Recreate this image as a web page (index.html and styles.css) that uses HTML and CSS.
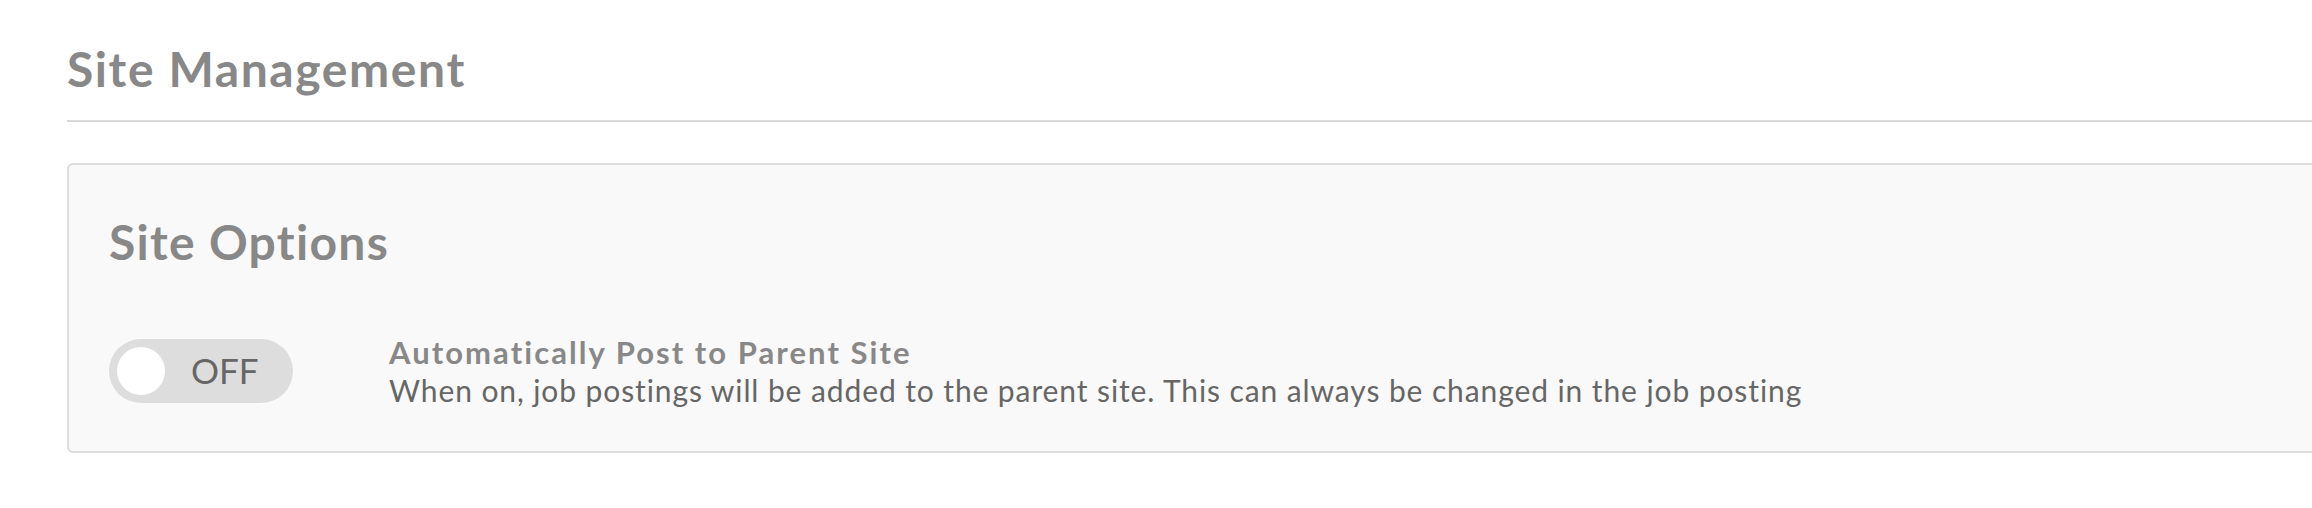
FILE: index.html
```html
<!DOCTYPE html>
<html lang="en">
<head>
<meta charset="utf-8">
<title>Site Management</title>
<link rel="stylesheet" href="styles.css">
</head>
<body>
<main class="page">
  <header class="page-header">
    <h1 class="page-title">Site Management</h1>
  </header>
  <section class="card">
    <h2 class="card-title">Site Options</h2>
    <div class="option-row">
      <div class="toggle" role="switch" aria-checked="false">
        <span class="toggle-knob"></span>
        <span class="toggle-text">OFF</span>
      </div>
      <div class="option-text">
        <div class="option-label">Automatically Post to Parent Site</div>
        <div class="option-desc">When on, job postings will be added to the parent site. This can always be changed in the job posting</div>
      </div>
    </div>
  </section>
</main>
</body>
</html>
```
FILE: styles.css
```css
html, body {
  margin: 0;
  padding: 0;
  background: #ffffff;
  overflow: hidden;
}

body {
  font-family: Lato, "Open Sans", "Liberation Sans", sans-serif;
  font-variant-ligatures: none;
}

.page {
  padding: 40px 0 0 67px;
  margin-right: -20px;
}

.page-header {
  padding-bottom: 22px;
  border-bottom: 2px solid #d9d9d9;
}

.page-title {
  margin: 0;
  font-size: 48px;
  line-height: 57.6px;
  font-weight: 700;
  letter-spacing: 1.6px;
  color: #888888;
}

.card {
  margin-top: 41px;
  background: #f9f9f9;
  border: 2px solid #dddddd;
  border-radius: 6px;
  padding: 48.6px 40px 41.6px 40px;
}

.card-title {
  margin: 0;
  font-size: 48px;
  line-height: 57.6px;
  font-weight: 700;
  letter-spacing: 1.3px;
  color: #888888;
}

.option-row {
  margin-top: 62.2px;
  display: flex;
  align-items: center;
  gap: 96px;
}

.toggle {
  flex: none;
  width: 184px;
  height: 64px;
  box-sizing: border-box;
  border-radius: 32px;
  background: #dddddd;
  display: flex;
  align-items: center;
  padding-left: 8px;
}

.toggle-knob {
  width: 48px;
  height: 48px;
  border-radius: 50%;
  background: #ffffff;
  flex: none;
}

.toggle-text {
  margin-left: 26px;
  font-size: 35px;
  color: #666666;
  line-height: 1;
}

.option-text {
  font-size: 30px;
  line-height: 38px;
}

.option-label {
  font-size: 31px;
  font-weight: 700;
  letter-spacing: 2.05px;
  color: #888888;
}

.option-desc {
  letter-spacing: 0.9px;
  color: #666666;
}
```
